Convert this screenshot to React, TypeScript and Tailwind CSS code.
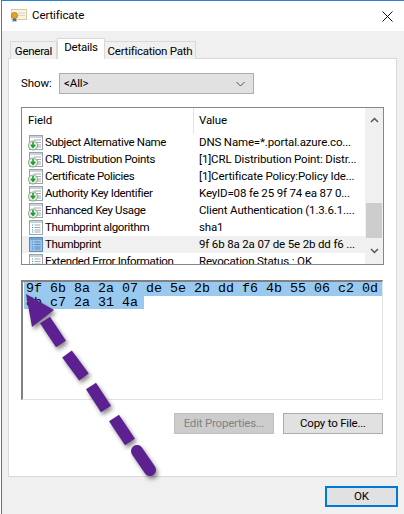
const FONT = "font-['Roboto','Noto_Sans',sans-serif]";

const FIELDS = [
  { name: 'Subject Alternative Name', value: 'DNS Name=*.portal.azure.co...', ext: true },
  { name: 'CRL Distribution Points', value: '[1]CRL Distribution Point: Distr...', ext: true },
  { name: 'Certificate Policies', value: '[1]Certificate Policy:Policy Ide...', ext: true },
  { name: 'Authority Key Identifier', value: 'KeyID=08 fe 25 9f 74 ea 87 0...', ext: true },
  { name: 'Enhanced Key Usage', value: 'Client Authentication (1.3.6.1....', ext: true },
  { name: 'Thumbprint algorithm', value: 'sha1', ext: false },
  { name: 'Thumbprint', value: '9f 6b 8a 2a 07 de 5e 2b dd f6 ...', ext: false, selected: true },
  { name: 'Extended Error Information', value: 'Revocation Status : OK', ext: false },
];

function FieldIcon({ ext, selected }: { ext: boolean; selected?: boolean }) {
  return (
    <svg width="16" height="17" viewBox="0 0 16 17" className="shrink-0">
      <rect x="1.500" y="1.500" width="13" height="14" fill={selected ? '#9cc4e8' : '#fff'} stroke={selected ? '#5b8db8' : '#9aa3ab'} />
      <rect x="2" y="2" width="12" height="2" fill={selected ? '#6fa3d0' : '#c9d2d9'} />
      {ext ? (
        <>
          <path d="M6 6h7M6 8.500h7M8 11h5M8 13h5" stroke="#a0a8ae" />
          <circle cx="5" cy="11.500" r="4.500" fill="#e8f5e4" stroke="#8a9a8c" />
          <path d="M5 8v5M2.800 10.800 5 13.300l2.200-2.500" fill="none" stroke="#1f9a35" strokeWidth="1.600" />
        </>
      ) : (
        <>
          <path d="M4 6h1M4 8.500h1M4 11h1M4 13h1" stroke="#3a8fd0" />
          <path d="M6.500 6h6M6.500 8.500h6M6.500 11h6M6.500 13h6" stroke={selected ? '#5b8db8' : '#a0a8ae'} />
        </>
      )}
    </svg>
  );
}

function CertIcon() {
  return (
    <svg width="16" height="14" viewBox="0 0 16 14" className="shrink-0">
      <rect x="0.500" y="0.500" width="15" height="10" fill="#fbf3dc" stroke="#d8c9a4" />
      <path d="M7 4h7M7 6.500h7" stroke="#d8d8d0" />
      <path d="M2 8.500 1.500 13l2-1 2 1-.5-4.500z" fill="#3f6fc0" />
      <circle cx="3.500" cy="6.500" r="3" fill="#e3a62b" stroke="#b97f16" />
    </svg>
  );
}

function DashedArrow() {
  return (
    <svg width="404" height="514" viewBox="0 0 404 514" className="absolute left-0 top-0 pointer-events-none drop-shadow-[2px_3px_2px_rgba(0,0,0,0.45)]">
      <path d="M26 294 54 310 32 327Z" fill="#5c2091" />
      <g stroke="#5c2091" strokeWidth="12" fill="none">
        <path d="M45 320 61 344" />
        <path d="M67 354 84 377" />
        <path d="M91 386 106 409" />
        <path d="M114 418 130 442" />
        <path d="M137 451 150 470" strokeLinecap="round" />
      </g>
    </svg>
  );
}

export default function App() {
  return (
    <div className={`relative w-[404px] h-[514px] bg-white overflow-hidden text-[11.5px] tracking-[-0.1px] text-black ${FONT}`}>
      <div className="ml-px h-full border-l border-t border-[#2b7fd0] bg-[#f0f0f0] flex flex-col">
        {/* Title bar */}
        <div className="h-[30px] bg-white flex items-center pl-[9px] pr-[11px] gap-[5px]">
          <CertIcon />
          <span>Certificate</span>
          <svg width="11" height="11" viewBox="0 0 11 11" className="ml-auto">
            <path d="M.5.500l10 10M10.500.500l-10 10" stroke="#111" fill="none" />
          </svg>
        </div>

        {/* Tabs */}
        <div className="flex items-end h-[28px] pl-2 -mb-px relative z-10 whitespace-nowrap tracking-[-0.25px]">
          <div className="w-[47px] h-[18px] bg-[#f0f0f0] border border-b-0 border-[#d9d9d9] text-center leading-[18px]">General</div>
          <div className="w-[48px] h-[21px] bg-white border border-b-0 border-[#d9d9d9] text-center leading-[17px]">Details</div>
          <div className="w-[91px] h-[18px] bg-[#f0f0f0] border border-b-0 border-l-0 border-[#d9d9d9] text-center leading-[18px]">Certification Path</div>
        </div>

        {/* Panel */}
        <div className="ml-1.5 w-[389px] h-[419px] bg-white border border-[#d9d9d9] px-3 pt-3.5">
          <div className="flex items-center h-[21px]">
            <span className="w-[38px]">Show:</span>
            <div className="w-[195px] h-[21px] bg-[#e1e1e1] border border-[#adadad] flex items-center justify-between pl-1 pr-2">
              <span>&lt;All&gt;</span>
              <svg width="9" height="6" viewBox="0 0 9 6"><path d="M.5 1 4.500 5l4-4" fill="none" stroke="#555" /></svg>
            </div>
          </div>

          {/* Field list */}
          <div className="mt-[13px] w-[363px] h-[158px] border border-[#828790] flex overflow-hidden">
            <div className="w-[343px] flex flex-col">
              <div className="h-[26px] shrink-0 flex items-center">
                <span className="w-[171px] pl-[6px]">Field</span>
                <span className="border-l border-[#e5e5e5] h-full pl-[5px] pt-[4px]">Value</span>
              </div>
              {FIELDS.map((f) => (
                <div key={f.name} className={`h-[17px] shrink-0 flex items-center whitespace-nowrap ${f.selected ? 'bg-[#f0f0f0]' : ''}`}>
                  <div className="w-[177px] shrink-0 flex items-center gap-[1px] pl-[6px]">
                    <FieldIcon ext={f.ext} selected={f.selected} />
                    <span className="tracking-[-0.35px]">{f.name}</span>
                  </div>
                  <span className="tracking-[-0.15px]">{f.value}</span>
                </div>
              ))}
            </div>
            <div className="w-[18px] bg-[#f0f0f0] flex flex-col items-center">
              <svg width="9" height="6" viewBox="0 0 9 6" className="mt-[9px]"><path d="M1 5 4.500 1.500 8 5" fill="none" stroke="#555" strokeWidth="1.500" /></svg>
              <div className="mt-[80px] w-4 h-[35px] bg-[#cdcdcd]" />
              <svg width="9" height="6" viewBox="0 0 9 6" className="mt-[10px]"><path d="M1 1 4.500 4.500 8 1" fill="none" stroke="#555" strokeWidth="1.500" /></svg>
            </div>
          </div>

          {/* Value box */}
          <div className="mt-[15px] w-[362px] h-[120px] border-t-2 border-l-2 border-[#828282] border-r border-b border-r-[#e3e3e3] border-b-[#e3e3e3] pl-px font-['Liberation_Mono',monospace] text-[13.33px] tracking-normal leading-[14px]">
            <div className="bg-[#99c9ef] h-[14px] pl-[2px] whitespace-pre">9f 6b 8a 2a 07 de 5e 2b dd f6 4b 55 06 c2 0d</div>
            <div className="bg-[#99c9ef] h-[13px] w-[120px] pl-[2px] whitespace-pre">8b c7 2a 31 4a</div>
          </div>

          <div className="mt-[13px] flex justify-end gap-[9px] pr-px tracking-[-0.2px]">
            <div className="w-[100px] h-[21px] bg-[#cccccc] border border-[#bfbfbf] text-[#838383] text-center leading-[19px]">Edit Properties...</div>
            <div className="w-[100px] h-[21px] bg-[#e1e1e1] border border-[#adadad] text-center leading-[19px]">Copy to File...</div>
          </div>
        </div>

        <div className="mt-[9px] ml-[323px] w-[73px] h-[21px] bg-[#e1e1e1] border-2 border-[#0078d7] text-center leading-[17px]">OK</div>
      </div>
      <DashedArrow />
    </div>
  );
}
